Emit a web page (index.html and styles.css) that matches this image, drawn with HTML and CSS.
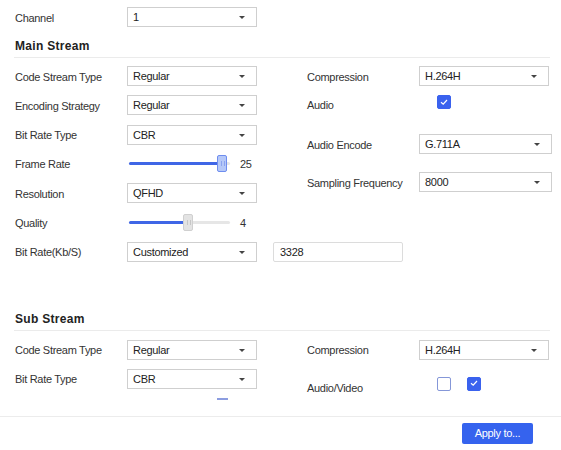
FILE: index.html
```html
<!DOCTYPE html>
<html>
<head>
<meta charset="utf-8">
<link rel="stylesheet" href="styles.css">
</head>
<body>
<div class="page">
  <div class="row"><span class="label">Channel</span><div class="select">1<i class="caret"></i></div></div>

  <h2 class="title title-main">Main Stream</h2>
  <div class="section">
    <div class="col">
      <div class="row"><span class="label">Code Stream Type</span><div class="select">Regular<i class="caret"></i></div></div>
      <div class="row"><span class="label">Encoding Strategy</span><div class="select">Regular<i class="caret"></i></div></div>
      <div class="row"><span class="label">Bit Rate Type</span><div class="select">CBR<i class="caret"></i></div></div>
      <div class="row"><span class="label">Frame Rate</span>
        <div class="slider"><div class="track"></div><div class="fill" style="width:90px"></div><div class="thumb" style="left:88px"></div></div>
        <span class="value">25</span></div>
      <div class="row"><span class="label">Resolution</span><div class="select">QFHD<i class="caret"></i></div></div>
      <div class="row"><span class="label">Quality</span>
        <div class="slider"><div class="track"></div><div class="fill" style="width:56px"></div><div class="thumb thumb-gray" style="left:54px"></div></div>
        <span class="value">4</span></div>
      <div class="row"><span class="label">Bit Rate(Kb/S)</span><div class="select">Customized<i class="caret"></i></div><div class="input">3328</div></div>
    </div>
    <div class="col-right">
      <div class="row"><span class="label">Compression</span><div class="select">H.264H<i class="caret"></i></div></div>
      <div class="row row-check r-audio"><span class="label lbl-low">Audio</span><span class="check on"><svg viewBox="0 0 14 14" width="14" height="14"><polyline points="4,7.2 6.2,9.2 10,5" fill="none" stroke="#fff" stroke-width="1.2"/></svg></span></div>
      <div class="row r-enc"><span class="label">Audio Encode</span><div class="select wide">G.711A<i class="caret"></i></div></div>
      <div class="row r-samp"><span class="label">Sampling Frequency</span><div class="select wide">8000<i class="caret"></i></div></div>
    </div>
  </div>

  <h2 class="title title-sub">Sub Stream</h2>
  <div class="section section-sub">
    <div class="col col-sub">
      <div class="row"><span class="label">Code Stream Type</span><div class="select">Regular<i class="caret"></i></div></div>
      <div class="row"><span class="label">Bit Rate Type</span><div class="select">CBR<i class="caret"></i></div></div>
      <div class="dash"></div>
    </div>
    <div class="col-right">
      <div class="row"><span class="label">Compression</span><div class="select">H.264H<i class="caret"></i></div></div>
      <div class="row row-check r-av"><span class="label lbl-low2">Audio/Video</span><span class="check"></span><span class="check on second"><svg viewBox="0 0 14 14" width="14" height="14"><polyline points="4,7.2 6.2,9.2 10,5" fill="none" stroke="#fff" stroke-width="1.2"/></svg></span></div>
    </div>
  </div>
</div>
<div class="footer"><button class="btn">Apply to...</button></div>
</body>
</html>
```
FILE: styles.css
```css
* { box-sizing: border-box; margin: 0; padding: 0; }
body {
  margin: 0;
  background: #fff;
  font-family: "Liberation Sans", Arial, sans-serif;
  font-size: 11px;
  letter-spacing: -0.3px;
  color: #333;
}
.page { padding: 7px 11px 0 15px; }
.row { display: flex; align-items: center; height: 20px; }
.label { width: 112px; flex: none; white-space: nowrap; padding-top: 1px; }
.select {
  position: relative;
  width: 130px;
  height: 20px;
  flex: none;
  border: 1px solid #cfcfcf;
  background: #fff;
  padding-left: 5px;
  line-height: 18px;
  color: #222;
}
.select.wide { width: 133px; }
.caret {
  position: absolute;
  right: 11px;
  top: 8px;
  width: 0; height: 0;
  border-left: 3px solid transparent;
  border-right: 3px solid transparent;
  border-top: 3px solid #444;
}
.title {
  font-size: 12px;
  font-weight: bold;
  letter-spacing: 0.3px;
  line-height: 16px;
  padding: 0 0 3px 1px;
  margin-left: -1px;
  border-bottom: 1px solid #ebebeb;
  color: #222;
}
.title-main { margin-top: 11px; }
.title-sub { margin-top: 49px; }
.section { display: grid; grid-template-columns: 292px 1fr; margin-top: 8px; }
.section-sub { margin-top: 9px; }
.col { display: flex; flex-direction: column; gap: 9.33px; }
.col-sub { gap: 9px; }
.col-right { display: flex; flex-direction: column; }
.r-audio { margin-top: 9px; }
.r-enc { margin-top: 19px; }
.r-samp { margin-top: 18px; }
.r-av { margin-top: 17px; }
.row-check { align-items: flex-start; }
.lbl-low { line-height: 13px; padding-top: 4px; }
.lbl-low2 { line-height: 13px; padding-top: 5px; }
.check {
  width: 14px; height: 14px;
  margin-left: 18px;
  border: 1.5px solid #8597d8;
  border-radius: 2px;
  background: #fff;
  flex: none;
  display: block;
}
.check.on { background: #3a62ee; border-color: #3a62ee; }
.check svg { display: block; margin: -1.5px; }
.check.second { margin-left: 16px; }
.slider { position: relative; width: 101px; height: 20px; margin-left: 2px; flex: none; }
.track { position: absolute; left: 0; right: 0; top: 8.5px; height: 3px; background: #e6e6e6; border-radius: 2px; }
.fill { position: absolute; left: 0; top: 8.5px; height: 3px; background: #3f66e6; border-radius: 2px; }
.thumb {
  position: absolute;
  top: 1px;
  width: 10px;
  height: 17px;
  border: 1px solid #6e8def;
  background: #b5c8f8;
  border-radius: 2px;
}
.thumb::before {
  content: "";
  position: absolute;
  left: 3px; top: 5px;
  width: 2px; height: 5px;
  border-left: 1px solid #8aa3ef;
  border-right: 1px solid #8aa3ef;
}
.thumb-gray { background: #e3e3e3; border-color: #d0d0d0; }
.thumb-gray::before { border-color: #c6c6c6; }
.value { margin-left: 10px; color: #333; padding-top: 1px; }
.input {
  width: 130px; height: 20px;
  flex: none;
  margin-left: 16px;
  border: 1px solid #dcdcdc;
  border-radius: 2px;
  padding-left: 6px;
  line-height: 18px;
  color: #222;
}
.dash { margin-left: 202px; width: 11px; height: 2px; background: #8c9de0; }
.footer { margin-top: 16px; border-top: 1px solid #ececec; padding: 6px 0 0 462px; }
.btn {
  display: block;
  width: 71px; height: 21px;
  border: none;
  border-radius: 2px;
  background: #3563ee;
  color: #fff;
  font-family: "Liberation Sans", Arial, sans-serif;
  font-size: 11px;
  letter-spacing: -0.3px;
}
```
